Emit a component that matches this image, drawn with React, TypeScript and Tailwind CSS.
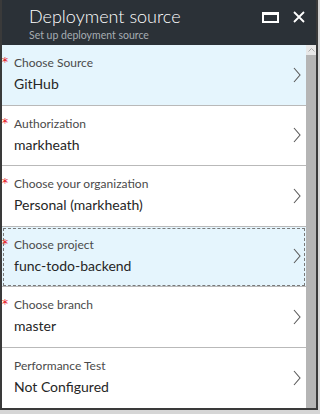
import React from 'react';

type Item = {
    label: string;
    value: string;
    required?: boolean;
    selected?: boolean;
    focused?: boolean;
};

const items: Item[] = [
    { label: 'Choose Source', value: 'GitHub', required: true, selected: true },
    { label: 'Authorization', value: 'markheath', required: true },
    { label: 'Choose your organization', value: 'Personal (markheath)', required: true },
    { label: 'Choose project', value: 'func-todo-backend', required: true, selected: true, focused: true },
    { label: 'Choose branch', value: 'master', required: true },
    { label: 'Performance Test', value: 'Not Configured' },
];

const Chevron = () => (
    <svg width="8" height="16" viewBox="0 0 8 16" className="shrink-0">
        <path d="M1 1 L7 8 L1 15" fill="none" stroke="#5a5a5a" strokeWidth="1.1" />
    </svg>
);

const Row = ({ item, last }: { item: Item; last: boolean }) => (
    <div
        className={`relative h-[60.5px] shrink-0 flex items-center pr-[5px] ${item.selected ? 'bg-[#e5f5fd]' : 'bg-white'} ${last ? '' : 'border-b border-[#b9b9b9]'}`}
    >
        {item.focused && (
            <div className="absolute inset-x-[1px] top-[1px] bottom-0 border border-dashed border-[#7a7a7a] pointer-events-none" />
        )}
        <div className="flex-1 pl-[12px] relative">
            {item.required && (
                <span className="absolute left-[0px] top-[1px] text-[#e81123] text-[12px] leading-none font-['DejaVu_Sans']">*</span>
            )}
            <div className="text-[12px] leading-[16px] text-[#4a4a4a]">{item.label}</div>
            <div className="text-[14px] leading-[20px] text-[#262626] mt-[3px]">{item.value}</div>
        </div>
        <Chevron />
    </div>
);

const App = () => {
    return (
        <div
            className="w-[320px] h-[414px] bg-[#d6d6d6] overflow-hidden"
            style={{ fontFamily: '"Segoe UI", Lato, "Noto Sans", sans-serif' }}
        >
            <div className="w-[318px] h-[410px] border-x-2 border-b-2 border-[#3a3a3a] flex flex-col bg-white">
                <div className="h-[45px] shrink-0 bg-[#2b3137] flex items-start pl-[27px] pr-[11px]">
                    <div className="flex-1 pt-[4px]">
                        <div className="text-white text-[18px] leading-[25px] font-light">Deployment source</div>
                        <div className="text-[#a6adb3] text-[10.5px] leading-[13px]">Set up deployment source</div>
                    </div>
                    <div className="flex items-center gap-[14px] pt-[11px]">
                        <div className="w-[17px] h-[11px] border-2 border-white border-t-[3px]" />
                        <svg width="12" height="12" viewBox="0 0 12 12">
                            <path d="M1 1 L11 11 M11 1 L1 11" stroke="#fff" strokeWidth="1.8" />
                        </svg>
                    </div>
                </div>
                <div className="flex-1 flex min-h-0">
                    <div className="flex-1 flex flex-col">
                        {items.map((item, i) => (
                            <Row key={item.label} item={item} last={i === items.length - 1} />
                        ))}
                    </div>
                    <div className="w-[10px] shrink-0 bg-[#b5b5b5] flex flex-col">
                        <div className="h-[10px] bg-[#e8e8e8] flex items-center justify-center">
                            <svg width="7" height="4" viewBox="0 0 7 4">
                                <path d="M0.5 3.5 L3.5 0.5 L6.5 3.5" fill="none" stroke="#aaa" strokeWidth="1" />
                            </svg>
                        </div>
                    </div>
                </div>
            </div>
        </div>
    );
};

export default App;
